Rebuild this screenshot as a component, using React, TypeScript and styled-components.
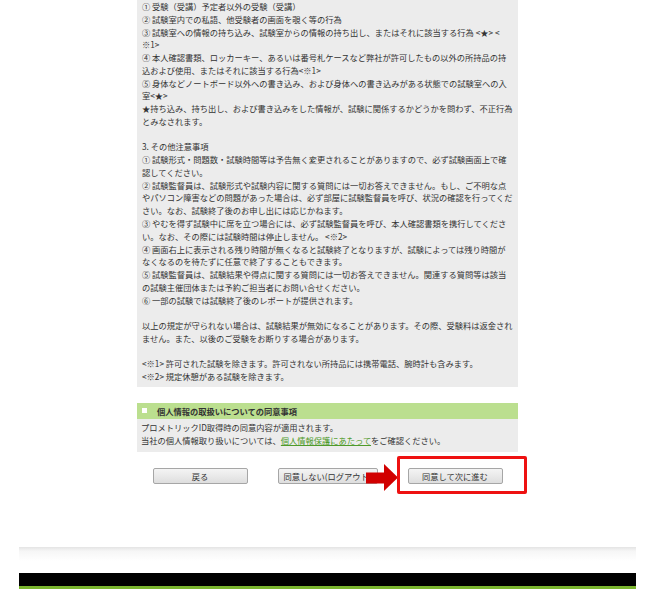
import React from 'react';
import styled, { createGlobalStyle } from 'styled-components';

// 画面の文言（参照画像の改行位置に合わせて1行ずつ）
const noticeLines = [
  '① 受験（受講）予定者以外の受験（受講）',
  '② 試験室内での私語、他受験者の画面を覗く等の行為',
  '③ 試験室への情報の持ち込み、試験室からの情報の持ち出し、またはそれに該当する行為 <★> <',
  '※1>',
  '④ 本人確認書類、ロッカーキー、あるいは番号札ケースなど弊社が許可したもの以外の所持品の持',
  '込および使用、またはそれに該当する行為<※1>',
  '⑤ 身体などノートボード以外への書き込み、および身体への書き込みがある状態での試験室への入',
  '室<★>',
  '★持ち込み、持ち出し、および書き込みをした情報が、試験に関係するかどうかを問わず、不正行為',
  'とみなされます。',
  '',
  '3. その他注意事項',
  '① 試験形式・問題数・試験時間等は予告無く変更されることがありますので、必ず試験画面上で確',
  '認してください。',
  '② 試験監督員は、試験形式や試験内容に関する質問には一切お答えできません。もし、ご不明な点',
  'やパソコン障害などの問題があった場合は、必ず部屋に試験監督員を呼び、状況の確認を行ってくだ',
  'さい。なお、試験終了後のお申し出には応じかねます。',
  '③ やむを得ず試験中に席を立つ場合には、必ず試験監督員を呼び、本人確認書類を携行してくださ',
  'い。なお、その際には試験時間は停止しません。 <※2>',
  '④ 画面右上に表示される残り時間が無くなると試験終了となりますが、試験によっては残り時間が',
  'なくなるのを待たずに任意で終了することもできます。',
  '⑤ 試験監督員は、試験結果や得点に関する質問には一切お答えできません。関連する質問等は該当',
  'の試験主催団体または予約ご担当者にお問い合せください。',
  '⑥ 一部の試験では試験終了後のレポートが提供されます。',
  '',
  '以上の規定が守られない場合は、試験結果が無効になることがあります。その際、受験料は返金され',
  'ません。また、以後のご受験をお断りする場合があります。',
  '',
  '<※1> 許可された試験を除きます。許可されない所持品には携帯電話、腕時計も含みます。',
  '<※2> 規定休憩がある試験を除きます。',
];

function App() {
  return (
    <>
      <GlobalStyle />
      <Page>
        <Content>
          <NoticeBox>{noticeLines.join('\n')}</NoticeBox>

          <Section>
            <SectionHeader>
              <Bullet />
              個人情報の取扱いについての同意事項
            </SectionHeader>
            <SectionBody>
              プロメトリックID取得時の同意内容が適用されます。
              <br />
              当社の個人情報取り扱いについては、
              <PolicyLink href="#">個人情報保護にあたって</PolicyLink>
              をご確認ください。
            </SectionBody>
          </Section>

          <ButtonRow>
            <Button $width={95}>戻る</Button>
            <Button $width={100}>同意しない(ログアウト)</Button>
            <Highlight>
              <Button $width={95}>同意して次に進む</Button>
              <Arrow width="32" height="27" viewBox="0 0 32 27">
                <rect x="0" y="8.5" width="18.5" height="11" fill="#d10000" />
                <polygon points="18,0 32,13.5 18,27" fill="#d10000" />
              </Arrow>
              <RedFrame />
            </Highlight>
          </ButtonRow>
        </Content>

        <Footer>
          <FooterFade />
          <FooterBar />
        </Footer>
      </Page>
    </>
  );
}

export default App;

const textColor = '#333333';
const boxGray = '#ececec';
const headerGreen = '#bbdf8f';
const baseFont = 8.25; // 元画面の12pxを縮小した大きさ

const GlobalStyle = createGlobalStyle`
  html, body {
    margin: 0;
    padding: 0;
    background: #ffffff;
  }
  body {
    font-family: "Noto Sans CJK JP", "Noto Sans", sans-serif;
    color: ${textColor};
  }
`;

const Page = styled.div`
  width: 617px;
  margin-left: 19px;
`;

const Content = styled.div`
  width: 381px;
  margin: 0 auto;
`;

const NoticeBox = styled.div`
  background: ${boxGray};
  padding: 0 6px 4px 5px;
  font-size: ${baseFont}px;
  line-height: 12.76px;
  white-space: pre;
  overflow: hidden;
`;

const Section = styled.div`
  margin-top: 16px;
`;

const SectionHeader = styled.div`
  display: flex;
  align-items: center;
  height: 16px;
  padding-left: 5px;
  background: ${headerGreen};
  font-size: ${baseFont}px;
  font-weight: bold;
`;

const Bullet = styled.span`
  width: 5px;
  height: 5px;
  background: #ffffff;
  margin-right: 10px;
`;

const SectionBody = styled.div`
  background: ${boxGray};
  padding: 2px 5px 5px 4px;
  font-size: ${baseFont}px;
  line-height: 12.76px;
  white-space: nowrap;
`;

const PolicyLink = styled.a`
  color: #4e9a2a;
  text-decoration: underline;
`;

const ButtonRow = styled.div`
  display: flex;
  justify-content: center;
  gap: 30px;
  margin-top: 16px;
`;

const Button = styled.button<{ $width: number }>`
  width: ${(p) => p.$width}px;
  height: 16px;
  padding: 0;
  box-sizing: border-box;
  border: 1px solid #a6a6a6;
  border-radius: 2px;
  background: linear-gradient(#f4f4f4, #dedede);
  color: ${textColor};
  font-family: "Noto Sans CJK JP", sans-serif;
  font-size: ${baseFont}px;
  line-height: 14px;
  white-space: nowrap;
  overflow: hidden;
  text-align: center;
`;

/* 注釈（赤枠と矢印）は内容の上に重ねる */
const Highlight = styled.div`
  position: relative;
  display: flex;
`;

const Arrow = styled.svg`
  position: absolute;
  left: -42px;
  top: -4px;
`;

const RedFrame = styled.div`
  position: absolute;
  left: -11px;
  top: -12px;
  width: 130px;
  height: 38px;
  box-sizing: border-box;
  border: 3px solid #ee1111;
  border-radius: 2px;
`;

const Footer = styled.div`
  margin-top: 63px;
`;

const FooterFade = styled.div`
  height: 14px;
  background: linear-gradient(#e4e4e4, #f6f6f6 4px, #ffffff);
`;

const FooterBar = styled.div`
  margin-top: 12px;
  height: 13px;
  background: #000000;
  border-bottom: 3px solid #7ab52e;
`;
